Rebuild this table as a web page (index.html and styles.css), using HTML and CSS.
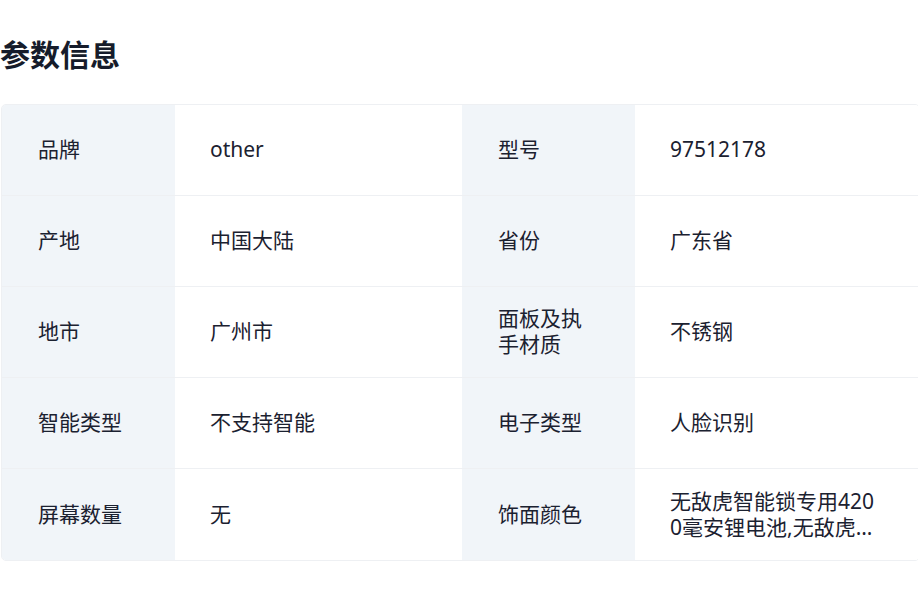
FILE: index.html
```html
<!DOCTYPE html>
<html lang="zh">
<head>
<meta charset="utf-8">
<link rel="stylesheet" href="styles.css">
</head>
<body>
<section class="params">
  <h2 class="title">参数信息</h2>
  <div class="table">
    <div class="cell label">品牌</div><div class="cell value">other</div>
    <div class="cell label">型号</div><div class="cell value">97512178</div>
    <div class="cell label">产地</div><div class="cell value">中国大陆</div>
    <div class="cell label">省份</div><div class="cell value">广东省</div>
    <div class="cell label">地市</div><div class="cell value">广州市</div>
    <div class="cell label">面板及执手材质</div><div class="cell value">不锈钢</div>
    <div class="cell label">智能类型</div><div class="cell value">不支持智能</div>
    <div class="cell label">电子类型</div><div class="cell value">人脸识别</div>
    <div class="cell label last">屏幕数量</div><div class="cell value last">无</div>
    <div class="cell label last">饰面颜色</div><div class="cell value last"><span class="clamp">无敌虎智能锁专用4200毫安锂电池,无敌虎智能锁专用电池</span></div>
  </div>
</section>
</body>
</html>
```

FILE: styles.css
```css
html, body {
  margin: 0;
  padding: 0;
  background: #ffffff;
  overflow: hidden;
}
body {
  font-family: "Noto Sans", "Noto Sans CJK SC", sans-serif;
  color: #1b2130;
}
.params {
  width: 920px;
  padding-top: 32px;
}
.title {
  margin: 0 0 29px 0;
  font-size: 30px;
  line-height: 43px;
  font-weight: 700;
  color: #161c2b;
  font-family: "Noto Sans CJK SC", sans-serif;
}
.table {
  display: grid;
  grid-template-columns: 173px 287px 173px 287px;
  grid-auto-rows: 91px;
  margin-left: 1px;
  border: 1px solid #eef0f3;
  border-radius: 5px;
  overflow: hidden;
}
.cell {
  display: flex;
  align-items: center;
  padding: 0 36px 2px 36px;
  font-size: 21px;
  line-height: 26px;
  border-bottom: 1px solid #eef0f3;
  box-sizing: border-box;
}
.cell.last {
  border-bottom: none;
}
.label {
  background: #f1f5f9;
  padding-left: 36px;
  padding-right: 40px;
}
.value {
  background: #ffffff;
  padding-left: 35px;
  padding-right: 42px;
}
.clamp {
  display: -webkit-box;
  -webkit-line-clamp: 2;
  -webkit-box-orient: vertical;
  overflow: hidden;
  word-break: break-all;
}
```
